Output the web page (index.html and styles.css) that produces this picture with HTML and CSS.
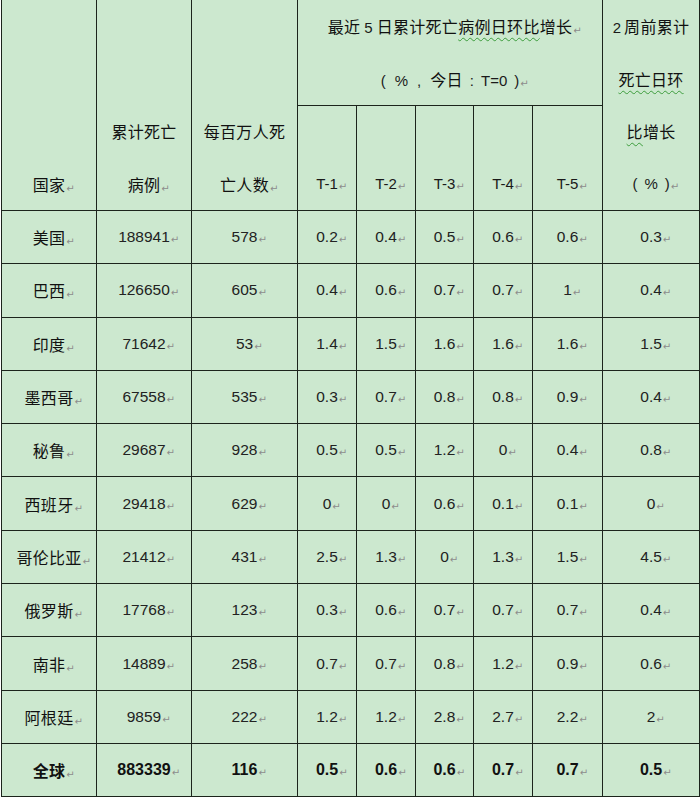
FILE: index.html
```html
<!DOCTYPE html>
<html lang="zh">
<head>
<meta charset="utf-8">
<title>累计死亡病例</title>
<link rel="stylesheet" href="styles.css">
</head>
<body>
<table class="sheet">
  <colgroup>
    <col class="c-country"><col class="c-total"><col class="c-pm">
    <col class="c-t"><col class="c-t"><col class="c-t3"><col class="c-t"><col class="c-t5">
    <col class="c-two">
  </colgroup>
  <thead>
    <tr class="hr1">
      <th rowspan="2" class="bottom"><div class="ln"><span class="cn">国家</span><span class="pm">↵</span></div></th>
      <th rowspan="2" class="bottom"><div class="ln"><span class="cn">累计死亡</span></div><div class="ln"><span class="cn">病例</span><span class="pm">↵</span></div></th>
      <th rowspan="2" class="bottom"><div class="ln"><span class="cn">每百万人死</span></div><div class="ln"><span class="cn">亡人数</span><span class="pm">↵</span></div></th>
      <th colspan="5" class="top"><div class="ln"><span class="cn">最近</span><span class="g4"></span>5<span class="g4"></span><span class="cn">日累计死亡<span class="wavy">病例日环比</span>增长</span><span class="pm">↵</span></div><div class="ln">(<span class="g9"></span>%<span class="g9"></span>,<span class="g9"></span><span class="cn">今日</span><span class="g7"></span>:<span class="g7"></span>T=0<span class="g7"></span>)<span class="pm">↵</span></div></th>
      <th rowspan="2" class="top"><div class="ln">2<span class="g3"></span><span class="cn">周前累计</span></div><div class="ln"><span class="cn"><span class="wavy">死亡日环</span></span></div><div class="ln"><span class="cn"><span class="wavy">比</span>增长</span></div><div class="ln">(<span class="g7"></span>%<span class="g7"></span>)<span class="pm">↵</span></div></th>
    </tr>
    <tr class="hr2">
      <th class="bottom"><div class="ln">T-1<span class="pm">↵</span></div></th>
      <th class="bottom"><div class="ln">T-2<span class="pm">↵</span></div></th>
      <th class="bottom"><div class="ln">T-3<span class="pm">↵</span></div></th>
      <th class="bottom"><div class="ln">T-4<span class="pm">↵</span></div></th>
      <th class="bottom"><div class="ln">T-5<span class="pm">↵</span></div></th>
    </tr>
  </thead>
  <tbody>
    <tr><td><span class="cn">美国</span><span class="pm">↵</span></td><td>188941<span class="pm">↵</span></td><td>578<span class="pm">↵</span></td><td>0.2<span class="pm">↵</span></td><td>0.4<span class="pm">↵</span></td><td>0.5<span class="pm">↵</span></td><td>0.6<span class="pm">↵</span></td><td>0.6<span class="pm">↵</span></td><td>0.3<span class="pm">↵</span></td></tr>
    <tr><td><span class="cn">巴西</span><span class="pm">↵</span></td><td>126650<span class="pm">↵</span></td><td>605<span class="pm">↵</span></td><td>0.4<span class="pm">↵</span></td><td>0.6<span class="pm">↵</span></td><td>0.7<span class="pm">↵</span></td><td>0.7<span class="pm">↵</span></td><td>1<span class="pm">↵</span></td><td>0.4<span class="pm">↵</span></td></tr>
    <tr><td><span class="cn">印度</span><span class="pm">↵</span></td><td>71642<span class="pm">↵</span></td><td>53<span class="pm">↵</span></td><td>1.4<span class="pm">↵</span></td><td>1.5<span class="pm">↵</span></td><td>1.6<span class="pm">↵</span></td><td>1.6<span class="pm">↵</span></td><td>1.6<span class="pm">↵</span></td><td>1.5<span class="pm">↵</span></td></tr>
    <tr><td><span class="cn">墨西哥</span><span class="pm">↵</span></td><td>67558<span class="pm">↵</span></td><td>535<span class="pm">↵</span></td><td>0.3<span class="pm">↵</span></td><td>0.7<span class="pm">↵</span></td><td>0.8<span class="pm">↵</span></td><td>0.8<span class="pm">↵</span></td><td>0.9<span class="pm">↵</span></td><td>0.4<span class="pm">↵</span></td></tr>
    <tr><td><span class="cn">秘鲁</span><span class="pm">↵</span></td><td>29687<span class="pm">↵</span></td><td>928<span class="pm">↵</span></td><td>0.5<span class="pm">↵</span></td><td>0.5<span class="pm">↵</span></td><td>1.2<span class="pm">↵</span></td><td>0<span class="pm">↵</span></td><td>0.4<span class="pm">↵</span></td><td>0.8<span class="pm">↵</span></td></tr>
    <tr><td><span class="cn">西班牙</span><span class="pm">↵</span></td><td>29418<span class="pm">↵</span></td><td>629<span class="pm">↵</span></td><td>0<span class="pm">↵</span></td><td>0<span class="pm">↵</span></td><td>0.6<span class="pm">↵</span></td><td>0.1<span class="pm">↵</span></td><td>0.1<span class="pm">↵</span></td><td>0<span class="pm">↵</span></td></tr>
    <tr><td><span class="cn">哥伦比亚</span><span class="pm">↵</span></td><td>21412<span class="pm">↵</span></td><td>431<span class="pm">↵</span></td><td>2.5<span class="pm">↵</span></td><td>1.3<span class="pm">↵</span></td><td>0<span class="pm">↵</span></td><td>1.3<span class="pm">↵</span></td><td>1.5<span class="pm">↵</span></td><td>4.5<span class="pm">↵</span></td></tr>
    <tr><td><span class="cn">俄罗斯</span><span class="pm">↵</span></td><td>17768<span class="pm">↵</span></td><td>123<span class="pm">↵</span></td><td>0.3<span class="pm">↵</span></td><td>0.6<span class="pm">↵</span></td><td>0.7<span class="pm">↵</span></td><td>0.7<span class="pm">↵</span></td><td>0.7<span class="pm">↵</span></td><td>0.4<span class="pm">↵</span></td></tr>
    <tr><td><span class="cn">南非</span><span class="pm">↵</span></td><td>14889<span class="pm">↵</span></td><td>258<span class="pm">↵</span></td><td>0.7<span class="pm">↵</span></td><td>0.7<span class="pm">↵</span></td><td>0.8<span class="pm">↵</span></td><td>1.2<span class="pm">↵</span></td><td>0.9<span class="pm">↵</span></td><td>0.6<span class="pm">↵</span></td></tr>
    <tr><td><span class="cn">阿根廷</span><span class="pm">↵</span></td><td>9859<span class="pm">↵</span></td><td>222<span class="pm">↵</span></td><td>1.2<span class="pm">↵</span></td><td>1.2<span class="pm">↵</span></td><td>2.8<span class="pm">↵</span></td><td>2.7<span class="pm">↵</span></td><td>2.2<span class="pm">↵</span></td><td>2<span class="pm">↵</span></td></tr>
    <tr class="total"><td><span class="cn">全球</span><span class="pm">↵</span></td><td>883339<span class="pm">↵</span></td><td>116<span class="pm">↵</span></td><td>0.5<span class="pm">↵</span></td><td>0.6<span class="pm">↵</span></td><td>0.6<span class="pm">↵</span></td><td>0.7<span class="pm">↵</span></td><td>0.7<span class="pm">↵</span></td><td>0.5<span class="pm">↵</span></td></tr>
  </tbody>
</table>
</body>
</html>
```
FILE: styles.css
```css
html, body {
  margin: 0;
  padding: 0;
  background: #ffffff;
}
body {
  padding-left: 1px;
}
.sheet {
  border-collapse: collapse;
  table-layout: fixed;
  width: 699px;
  background: #cce8cf;
  font-family: "Liberation Sans", "Noto Sans CJK SC", sans-serif;
  font-size: 15px;
  color: #1a1a1a;
  border-top: hidden;
}
.c-country { width: 95px; }
.c-total { width: 95px; }
.c-pm { width: 106px; }
.c-t { width: 59px; }
.c-t3 { width: 58px; }
.c-t5 { width: 70px; }
.c-two { width: 97px; }

.sheet th, .sheet td {
  border: 1px solid #1c241c;
  padding: 0;
  text-align: center;
  font-weight: normal;
  white-space: nowrap;
}
.hr1 { height: 105px; }
.hr2 { height: 105px; }
.sheet th.bottom { vertical-align: bottom; }
.sheet th.top { vertical-align: top; }
.ln {
  height: 52.5px;
  line-height: 52.5px;
}
.sheet tbody tr { height: 53.3px; }
.sheet td {
  vertical-align: middle;
  color: #222;
  font-size: 15.5px;
}
.sheet .total td {
  font-weight: bold;
  font-size: 16px;
  color: #111;
}

.cn {
  font-family: "Noto Sans CJK SC", sans-serif;
  font-size: 16px;
  letter-spacing: 0.3px;
  color: #111;
}
.pm {
  display: inline-block;
  width: 0;
  overflow: visible;
  font-family: "DejaVu Sans", sans-serif;
  font-size: 10px;
  font-weight: normal;
  letter-spacing: 0;
  color: #8c8c8c;
  vertical-align: -1px;
  text-indent: 1px;
}
.wavy {
  text-decoration: underline wavy #3c9c3c;
  text-decoration-thickness: 1px;
  text-underline-offset: 4px;
}
.g3 { display: inline-block; width: 3px; }
.g4 { display: inline-block; width: 4px; }
.g7 { display: inline-block; width: 7px; }
.g9 { display: inline-block; width: 9px; }
```
